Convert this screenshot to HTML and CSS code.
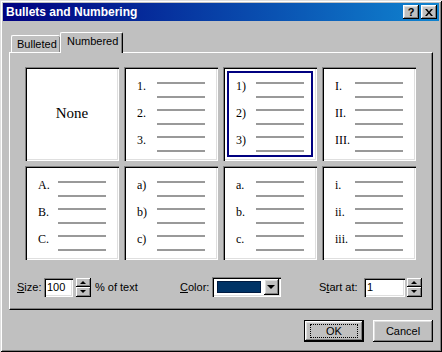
FILE: index.html
```html
<!DOCTYPE html>
<html lang="en">
<head>
    <meta charset="UTF-8">
    <title>Bullets and Numbering</title>
    <link rel="stylesheet" href="styles.css">
</head>
<body>
    <div class="window">
        <div class="titlebar">
            <span class="title">Bullets and Numbering</span>
            <div class="captionButtons">
                <div class="capBtn help">?</div>
                <div class="capBtn">
                    <svg width="8" height="7" viewBox="0 0 8 7"><path d="M0 0h2l2 2.5 2-2.5h2l-3 3.5 3 3.5h-2l-2-2.5-2 2.5h-2l3-3.5z" fill="#000"/></svg>
                </div>
            </div>
        </div>
        <div class="dialogBody">
            <div class="tabs">
                <div class="tab">Bulleted</div>
                <div class="tab active">Numbered</div>
            </div>
            <div class="panel">
                <div class="stylesGrid">
                    <div class="cell noneCell">None</div>
                    <div class="cell">
                        <div class="item"><span class="num">1.</span><span class="lines"><i></i><i></i></span></div>
                        <div class="item"><span class="num">2.</span><span class="lines"><i></i><i></i></span></div>
                        <div class="item"><span class="num">3.</span><span class="lines"><i></i><i></i></span></div>
                    </div>
                    <div class="cell selected">
                        <div class="item"><span class="num">1)</span><span class="lines"><i></i><i></i></span></div>
                        <div class="item"><span class="num">2)</span><span class="lines"><i></i><i></i></span></div>
                        <div class="item"><span class="num">3)</span><span class="lines"><i></i><i></i></span></div>
                    </div>
                    <div class="cell">
                        <div class="item"><span class="num">I.</span><span class="lines"><i></i><i></i></span></div>
                        <div class="item"><span class="num">II.</span><span class="lines"><i></i><i></i></span></div>
                        <div class="item"><span class="num">III.</span><span class="lines"><i></i><i></i></span></div>
                    </div>
                    <div class="cell">
                        <div class="item"><span class="num">A.</span><span class="lines"><i></i><i></i></span></div>
                        <div class="item"><span class="num">B.</span><span class="lines"><i></i><i></i></span></div>
                        <div class="item"><span class="num">C.</span><span class="lines"><i></i><i></i></span></div>
                    </div>
                    <div class="cell">
                        <div class="item"><span class="num">a)</span><span class="lines"><i></i><i></i></span></div>
                        <div class="item"><span class="num">b)</span><span class="lines"><i></i><i></i></span></div>
                        <div class="item"><span class="num">c)</span><span class="lines"><i></i><i></i></span></div>
                    </div>
                    <div class="cell">
                        <div class="item"><span class="num">a.</span><span class="lines"><i></i><i></i></span></div>
                        <div class="item"><span class="num">b.</span><span class="lines"><i></i><i></i></span></div>
                        <div class="item"><span class="num">c.</span><span class="lines"><i></i><i></i></span></div>
                    </div>
                    <div class="cell">
                        <div class="item"><span class="num">i.</span><span class="lines"><i></i><i></i></span></div>
                        <div class="item"><span class="num">ii.</span><span class="lines"><i></i><i></i></span></div>
                        <div class="item"><span class="num">iii.</span><span class="lines"><i></i><i></i></span></div>
                    </div>
                </div>
                <div class="controls">
                    <div class="group sizeGroup">
                        <span class="label sizeLabel"><u>S</u>ize:</span>
                        <div class="field sizeField">100</div>
                        <div class="spinner"><span class="up"></span><span class="down"></span></div>
                        <span class="suffix">% of text</span>
                    </div>
                    <div class="group colorGroup">
                        <span class="label colorLabel"><u>C</u>olor:</span>
                        <div class="combo">
                            <div class="swatch"></div>
                            <div class="dropBtn"><span class="arrow"></span></div>
                        </div>
                    </div>
                    <div class="group startGroup">
                        <span class="label startLabel">S<u>t</u>art at:</span>
                        <div class="field startField">1</div>
                        <div class="spinner"><span class="up"></span><span class="down"></span></div>
                    </div>
                </div>
            </div>
            <div class="actions">
                <div class="btn defaultBtn"><span>OK</span></div>
                <div class="btn">Cancel</div>
            </div>
        </div>
    </div>
</body>
</html>
```

FILE: styles.css
```css
* {
    box-sizing: border-box;
}

body {
    margin: 0;
    background-color: #c0c0c0;
    font-family: "Liberation Sans", Arial, sans-serif;
    font-size: 11px;
    color: #000;
}

.window {
    width: 442px;
    height: 352px;
    padding: 3px;
    background-color: #c0c0c0;
    box-shadow: inset 1px 1px #dfdfdf, inset -1px -1px #000, inset 2px 2px #fff, inset -2px -2px #808080;
}

.titlebar {
    display: flex;
    align-items: center;
    justify-content: space-between;
    height: 18px;
    padding: 0 2px 0 3px;
    background: linear-gradient(90deg, #000080, #1084d0);
}

.title {
    color: #fff;
    font-weight: bold;
    font-size: 12px;
}

.captionButtons {
    display: flex;
    gap: 2px;
}

.capBtn {
    display: flex;
    align-items: center;
    justify-content: center;
    width: 16px;
    height: 14px;
    background-color: #c0c0c0;
    box-shadow: inset -1px -1px #000, inset 1px 1px #fff, inset -2px -2px #808080, inset 2px 2px #dfdfdf;
}

.help {
    font-weight: bold;
    font-size: 11px;
    padding-bottom: 1px;
}

.dialogBody {
    padding: 0 6px;
}

.tabs {
    display: flex;
    align-items: flex-end;
    height: 20px;
    margin-top: 11px;
    padding-left: 2px;
}

.tab {
    height: 17px;
    width: 49px;
    padding: 2px 0 0 5px;
    border-top: 1px solid #fff;
    border-left: 1px solid #fff;
    border-top-left-radius: 2px;
    border-top-right-radius: 2px;
    box-shadow: inset -1px 0 #808080;
}

.tab.active {
    position: relative;
    z-index: 1;
    width: 63px;
    height: 21px;
    margin-bottom: -1px;
    padding: 2px 0 0 6px;
    background-color: #c0c0c0;
    border-right: 1px solid #000;
    box-shadow: inset -1px 0 #808080;
}

.panel {
    height: 258px;
    padding: 14px 0 0 15px;
    border-top: 1px solid #fff;
    border-left: 1px solid #fff;
    border-right: 1px solid #000;
    border-bottom: 1px solid #000;
    box-shadow: inset -1px -1px #808080;
}

.stylesGrid {
    display: grid;
    grid-template-columns: repeat(4, 94px);
    grid-template-rows: repeat(2, 94px);
    gap: 5px;
}

.cell {
    background-color: #fff;
    padding: 15px 0 0 13px;
    box-shadow: inset 1px 1px #808080, inset 2px 2px #000, inset -1px -1px #fff, inset -2px -2px #dfdfdf;
}

.cell.selected {
    outline: 2px solid #000080;
    outline-offset: -6px;
}

.noneCell {
    display: flex;
    align-items: center;
    justify-content: center;
    padding: 0 0 1px 0;
    font-family: "Liberation Serif", "Times New Roman", serif;
    font-size: 15px;
}

.item {
    display: flex;
    height: 27px;
}

.num {
    width: 20px;
    margin-top: -2px;
    font-family: "Liberation Serif", "Times New Roman", serif;
    font-size: 12px;
    line-height: 12px;
}

.lines {
    width: 48px;
}

.lines i {
    display: block;
    height: 2px;
    background-color: #999;
}

.lines i + i {
    margin-top: 12px;
}

.controls {
    display: flex;
    align-items: center;
    height: 20px;
    margin: 17px 0 0 -8px;
}

.group {
    display: flex;
    align-items: center;
}

.sizeGroup {
    width: 163px;
}

.colorGroup {
    width: 139px;
}

.sizeLabel {
    width: 27px;
}

.colorLabel {
    width: 32px;
}

.startLabel {
    width: 45px;
}

.field {
    height: 19px;
    padding: 3px 0 0 3px;
    background-color: #fff;
    box-shadow: inset 1px 1px #808080, inset 2px 2px #000, inset -1px -1px #fff, inset -2px -2px #dfdfdf;
}

.sizeField {
    width: 29px;
}

.startField {
    width: 41px;
}

.spinner {
    display: flex;
    flex-direction: column;
    width: 15px;
    height: 19px;
    margin-left: 3px;
}

.startGroup .spinner {
    margin-left: 2px;
}

.spinner span {
    position: relative;
    flex: 1;
    background-color: #c0c0c0;
    box-shadow: inset -1px -1px #000, inset 1px 1px #fff, inset -2px -2px #808080;
}

.spinner .up::after,
.spinner .down::after {
    content: "";
    position: absolute;
    left: 4px;
    top: 3px;
    border-left: 3px solid transparent;
    border-right: 3px solid transparent;
}

.spinner .up::after {
    border-bottom: 3px solid #000;
}

.spinner .down::after {
    top: 3px;
    border-top: 3px solid #000;
}

.suffix {
    margin-left: 4px;
}

.combo {
    display: flex;
    align-items: center;
    width: 69px;
    height: 20px;
    padding: 2px;
    background-color: #fff;
    box-shadow: inset 1px 1px #808080, inset 2px 2px #000, inset -1px -1px #fff, inset -2px -2px #dfdfdf;
}

.swatch {
    width: 46px;
    height: 12px;
    margin: 0 3px 0 3px;
    background-color: #003366;
    border: 1px solid #001a40;
}

.dropBtn {
    display: flex;
    align-items: center;
    justify-content: center;
    width: 16px;
    height: 16px;
    background-color: #c0c0c0;
    box-shadow: inset -1px -1px #000, inset 1px 1px #fff, inset -2px -2px #808080, inset 2px 2px #dfdfdf;
}

.arrow {
    border-left: 4px solid transparent;
    border-right: 4px solid transparent;
    border-top: 4px solid #000;
}

.actions {
    display: flex;
    justify-content: flex-end;
    gap: 9px;
    margin-top: 10px;
}

.btn {
    display: flex;
    align-items: center;
    justify-content: center;
    width: 60px;
    height: 22px;
    background-color: #c0c0c0;
    box-shadow: inset -1px -1px #000, inset 1px 1px #fff, inset -2px -2px #808080, inset 2px 2px #dfdfdf;
}

.defaultBtn {
    border: 1px solid #000;
}

.defaultBtn span {
    display: flex;
    align-items: center;
    justify-content: center;
    width: 48px;
    height: 14px;
    border: 1px dotted #000;
}
```
